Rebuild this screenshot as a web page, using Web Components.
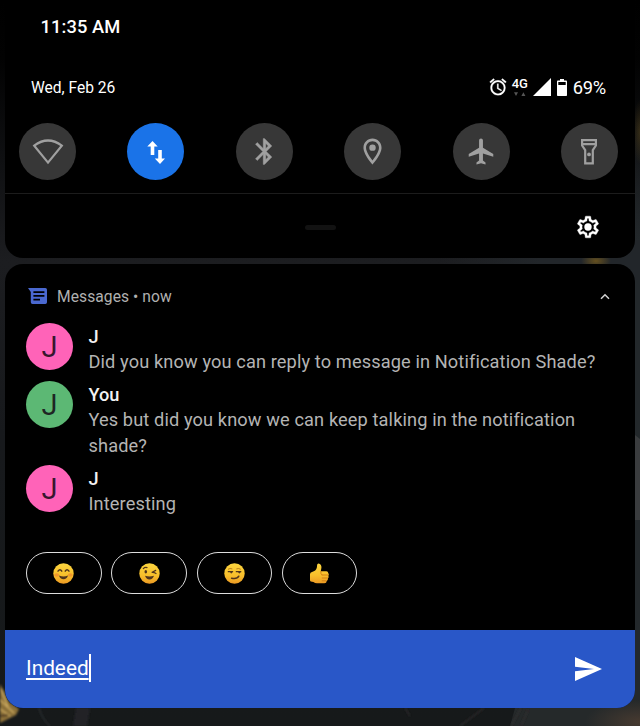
<!DOCTYPE html>
<html lang="en">
<head>
<meta charset="utf-8">
<title>Notification shade</title>
<style>
html,body{margin:0;height:100%;overflow:hidden;background:#000}
body{font-family:Roboto,"Noto Sans",sans-serif;color:#fff}
</style>
</head>
<body>
<notification-shade></notification-shade>
<script>
const ICONS = {
  wifi: ['0 0 32 28', '<path d="M2.2 7.6Q16 -2.6 29.8 7.6L16 24.6Z" fill="none" stroke="currentColor" stroke-width="2.2"/>'],
  data: ['0 0 18 26', '<path d="M5.5 2 10.7 7.4H7.3V16H3.7V7.4H.3zM13 25 7.8 19.6H11.2V11h3.6v8.6h3.2z" fill="currentColor"/>'],
  bluetooth: ['0 0 24 24', '<path fill="currentColor" stroke="currentColor" stroke-width=".3" d="M17.71 7.71L12 2h-1v7.59L6.41 5 5 6.41 10.59 12 5 17.59 6.41 19 11 14.41V22h1l5.71-5.71-4.3-4.29 4.3-4.29zM13 5.83l1.88 1.88L13 9.59V5.83zm1.88 10.46L13 18.17v-3.76l1.88 1.88z"/>'],
  location: ['0 0 24 24', '<path fill="currentColor" d="M12 2C8.13 2 5 5.13 5 9c0 5.25 7 13 7 13s7-7.75 7-13c0-3.87-3.13-7-7-7zM7 9c0-2.76 2.24-5 5-5s5 2.24 5 5c0 2.88-2.88 7.19-5 9.88C9.92 16.21 7 11.85 7 9z"/><circle cx="12" cy="9" r="2.5" fill="currentColor"/>'],
  plane: ['0 0 23 24', '<path fill="currentColor" d="M21 16v-2l-8-5V3.5c0-.83-.67-1.5-1.5-1.5S10 2.67 10 3.5V9l-8 5v2l8-2.5V19l-2 1.5V22l3.5-1 3.5 1v-1.5L13 19v-5.5l8 2.5z"/>'],
  torch: ['0 0 18 28', '<path d="M2.1 2.1H15.9V7.5L12.8 12.2V25.4H5.2V12.2L2.1 7.5ZM2 6.2H16" fill="none" stroke="currentColor" stroke-width="2.2"/><circle cx="9" cy="16.4" r="1.9" fill="currentColor"/>'],
  gear: ['0 0 24 24', '<path fill="currentColor" stroke="currentColor" stroke-width=".35" d="M19.43 12.98c.04-.32.07-.64.07-.98 0-.34-.03-.66-.07-.98l2.11-1.65c.19-.15.24-.42.12-.64l-2-3.46c-.09-.16-.26-.25-.44-.25-.06 0-.12.01-.17.03l-2.49 1c-.52-.4-1.08-.73-1.69-.98l-.38-2.65C14.46 2.18 14.25 2 14 2h-4c-.25 0-.46.18-.49.42l-.38 2.65c-.61.25-1.17.59-1.69.98l-2.49-1c-.06-.02-.12-.03-.18-.03-.17 0-.34.09-.43.25l-2 3.46c-.13.22-.07.49.12.64l2.11 1.65c-.04.32-.07.65-.07.98 0 .33.03.66.07.98l-2.11 1.65c-.19.15-.24.42-.12.64l2 3.46c.09.16.26.25.44.25.06 0 .12-.01.17-.03l2.49-1c.52.4 1.08.73 1.69.98l.38 2.65c.03.24.24.42.49.42h4c.25 0 .46-.18.49-.42l.38-2.65c.61-.25 1.17-.59 1.69-.98l2.49 1c.06.02.12.03.18.03.17 0 .34-.09.43-.25l2-3.46c.12-.22.07-.49-.12-.64l-2.11-1.65zm-1.98-1.71c.04.31.05.52.05.73 0 .21-.02.43-.05.73l-.14 1.13.89.7 1.08.84-.7 1.21-1.27-.51-1.04-.42-.9.68c-.43.32-.84.56-1.25.73l-1.06.43-.16 1.13-.2 1.35h-1.4l-.19-1.35-.16-1.13-1.06-.43c-.43-.18-.83-.41-1.23-.71l-.91-.7-1.06.43-1.27.51-.7-1.21 1.08-.84.89-.7-.14-1.13c-.03-.31-.05-.54-.05-.74s.02-.43.05-.73l.14-1.13-.89-.7-1.08-.84.7-1.21 1.27.51 1.04.42.9-.68c.43-.32.84-.56 1.25-.73l1.06-.43.16-1.13.2-1.35h1.39l.19 1.35.16 1.13 1.06.43c.43.18.83.41 1.23.71l.91.7 1.06-.43 1.27-.51.7 1.21-1.07.85-.89.7.14 1.13z"/><circle cx="12" cy="12" r="3.4" fill="currentColor"/>'],
  alarm: ['0 0 24 24', '<path fill="currentColor" stroke="currentColor" stroke-width=".3" d="M22 5.72l-4.6-3.86-1.29 1.53 4.6 3.86L22 5.72zM7.88 3.39L6.6 1.86 2 5.71l1.29 1.53 4.59-3.85zM12.5 8H11v6l4.75 2.85.75-1.23-4-2.37V8zM12 4c-4.97 0-9 4.03-9 9s4.02 9 9 9a9 9 0 0 0 0-18zm0 16c-3.87 0-7-3.13-7-7s3.13-7 7-7 7 3.13 7 7-3.13 7-7 7z"/>'],
  signal: ['0 0 18 18', '<path d="M18 0V18H0z" fill="currentColor"/>'],
  battery: ['0 0 10 17', '<path fill="currentColor" fill-rule="evenodd" d="M3 0H7V1.6H9.2Q10 1.6 10 2.4V16.2Q10 17 9.2 17H.8Q0 17 0 16.2V2.4Q0 1.6 .8 1.6H3zM1.3 3V6H8.7V3z"/>'],
  activity: ['0 0 12 4', '<path d="M0 .3H4L2 3.9zM7.4 3.9H11.4L9.4.3z" fill="currentColor"/>'],
  messages: ['0 0 19 16', '<path fill="currentColor" fill-rule="evenodd" d="M0 0H17.3Q19 0 19 1.7V14.3Q19 16 17.3 16H4.5Q2.8 16 2.8 14.3V4zM5.4 3.2V5H16.4V3.2zM5.4 7V8.8H16.4V7zM5.4 10.8V12.6H12V10.8z"/>'],
  up: ['0 0 10 7', '<path d="M1 5.8 5 1.7 9 5.8" fill="none" stroke="currentColor" stroke-width="1.5"/>'],
  send: ['0 0 27 24', '<path d="M0 0 27 12 0 24V14.3L19 12 0 9.7z" fill="currentColor"/>'],
  smile: ['0 0 21 21', '<circle cx="10.5" cy="10.5" r="10.2" fill="url(#g)"/><ellipse cx="3.7" cy="12" rx="2.4" ry="1.7" fill="#f08a2e" opacity=".75"/><ellipse cx="17.3" cy="12" rx="2.4" ry="1.7" fill="#f08a2e" opacity=".75"/><path d="M5 8.2Q7 5.2 8.8 8.2M12.2 8.2Q14 5.2 16 8.2" fill="none" stroke="#51351b" stroke-width="1.4" stroke-linecap="round"/><path d="M6 12.5Q10.5 14.3 15 12.5Q13.8 16.3 10.5 16.3T6 12.5z" fill="#51351b"/>'],
  wink: ['0 0 21 21', '<circle cx="10.5" cy="10.5" r="10.2" fill="url(#g)"/><ellipse cx="6.8" cy="8.8" rx="1.3" ry="1.8" fill="#51351b"/><path d="M4.3 5.6Q5.8 4 8 4.6M16.7 7.4 12.7 9.5Q14.7 9 17 10.5" fill="none" stroke="#51351b" stroke-width="1.2" stroke-linecap="round"/><path d="M6 12.8Q10.5 14.3 15 12.8Q13.8 16.5 10.5 16.5T6 12.8z" fill="#51351b"/>'],
  smirk: ['0 0 21 21', '<circle cx="10.5" cy="10.5" r="10.2" fill="url(#g)"/><path d="M4.3 8.7H8.6M12.3 8.7H16.8" stroke="#51351b" stroke-width="1.3" stroke-linecap="round"/><path d="M6.1 8.8H8.5Q8.3 10.5 7.3 10.5T6.1 8.8zM14.1 8.8H16.6Q16.4 10.5 15.4 10.5T14.1 8.8z" fill="#51351b"/><path d="M4 6.3Q6 4.9 8.3 5.9M12.4 5.9Q14.6 4.9 16.8 6.3" fill="none" stroke="#a66b17" stroke-width=".8"/><path d="M7.6 15.2Q13 16.4 14.8 13.2" fill="none" stroke="#51351b" stroke-width="1.5" stroke-linecap="round"/>'],
  thumb: ['0 0 21 21', '<path d="M1 11.2Q1 9.3 3 9 7 8 7.8 4.8L8.2 1.6Q9.2 0 10.8.9 13 2.4 12.3 5.6L11.8 8.2H17.3Q19.3 8.2 19.2 10 20.4 11 19.4 12.7 20.2 14.2 18.9 15.5 19.2 17.3 17.7 18 17.6 20.2 15.4 20.2H8Q6 20.2 4.4 18.9L1.8 18.6Q1 18.4 1 17z" fill="url(#g)"/><path d="M13 12H18.8M13.2 15H18.3M13.2 17.8H17M13 12Q11.4 11.4 11.8 8.4" fill="none" stroke="#cf7b13" stroke-width=".9" stroke-linecap="round"/>']
};
const GRAD = '<defs><linearGradient id="g" x1="0" y1="0" x2="0" y2="1"><stop offset="0" stop-color="#fcd53f"/><stop offset=".6" stop-color="#f8bf2b"/><stop offset="1" stop-color="#ec9a24"/></linearGradient></defs>';

function define(name, markup, after) {
  const tpl = document.createElement('template');
  tpl.innerHTML = markup;
  customElements.define(name, class extends HTMLElement {
    constructor() {
      super();
      this.attachShadow({ mode: 'open' }).append(tpl.content.cloneNode(true));
    }
    connectedCallback() { if (after) after(this, this.shadowRoot); }
  });
}

define('ui-icon', '<style>:host{display:block;flex:none}svg{display:block;width:100%;height:100%}</style><svg></svg>', (el, root) => {
  const [box, body] = ICONS[el.getAttribute('name')];
  const svg = root.querySelector('svg');
  svg.setAttribute('viewBox', box);
  svg.innerHTML = (body.includes('url(#g)') ? GRAD : '') + body;
  el.style.width = el.getAttribute('w') + 'px';
  el.style.height = el.getAttribute('h') + 'px';
});

define('quick-tile', `<style>
:host{display:flex;align-items:center;justify-content:center;width:57px;height:57px;border-radius:50%;background:#373737;color:#a0a0a0}
:host([active]){background:#1a73e8;color:#fff}
</style><slot></slot>`);

define('status-row', `<style>
:host{display:flex;align-items:center;height:24px;padding:0 29px 0 26px;font-size:15.6px;line-height:24px}
.date{padding-top:1px;letter-spacing:-.02px}
.right{margin-left:auto;display:flex;align-items:center}
.net{display:flex;flex-direction:column;align-items:center;width:16px;height:20px;margin:0 5px 0 4px;font-size:13px;line-height:14px;font-weight:500;letter-spacing:-.3px}
.act{color:#555;margin-top:1px}
.pct{font-size:18.3px;margin-left:6px;letter-spacing:-.2px;padding-top:1px}
</style><span class="date">Wed, Feb 26</span><div class="right">
<ui-icon name="alarm" w="20" h="20"></ui-icon>
<div class="net"><span>4G</span><ui-icon class="act" name="activity" w="12" h="4"></ui-icon></div>
<ui-icon name="signal" w="18" h="18"></ui-icon>
<ui-icon name="battery" w="10" h="17" style="margin-left:6px"></ui-icon>
<span class="pct">69%</span></div>`);

define('quick-settings', `<style>
:host{display:flex;flex-direction:column;box-sizing:border-box;height:258px;background:#000;border-radius:0 0 18px 18px}
.time{padding:15px 0 0 35.5px;height:60px;box-sizing:border-box;font-size:18.3px;line-height:24px;font-weight:500;letter-spacing:.1px}
status-row{margin-top:15px}
.tiles{display:flex;justify-content:space-between;padding:24px 17px 13px 14px}
.foot{flex:1;border-top:1px solid #1c1c1c;display:grid;grid-template-columns:1fr 31px 1fr;align-items:center}
.handle{height:5px;border-radius:3px;background:#121212;grid-column:2;margin-top:3px}
ui-icon.gear{justify-self:end;margin:2px 34px 0 0}
</style>
<div class="time">11:35 AM</div>
<status-row></status-row>
<div class="tiles">
<quick-tile><ui-icon name="wifi" w="32" h="28"></ui-icon></quick-tile>
<quick-tile active><ui-icon name="data" w="18" h="26"></ui-icon></quick-tile>
<quick-tile><ui-icon name="bluetooth" w="31" h="31"></ui-icon></quick-tile>
<quick-tile><ui-icon name="location" w="31" h="31"></ui-icon></quick-tile>
<quick-tile><ui-icon name="plane" w="30" h="31"></ui-icon></quick-tile>
<quick-tile><ui-icon name="torch" w="18" h="28"></ui-icon></quick-tile>
</div>
<div class="foot"><span class="handle"></span><ui-icon class="gear" name="gear" w="26" h="26"></ui-icon></div>`);

define('chat-message', `<style>
:host{display:flex;gap:15.5px;line-height:26px;font-size:18.2px}
.avatar{flex:none;width:47px;height:47px;border-radius:50%;display:grid;place-items:center;background:var(--tint,#ff63b8);color:rgba(20,10,20,.85);font-size:29px;line-height:48px;font-weight:400}
.name{font-weight:500;color:#f2f2f2;padding-top:1px;margin-bottom:-1px}
.text{color:#b4b4b4;letter-spacing:.12px}
</style>
<div class="avatar">J</div><div><div class="name"><slot name="name"></slot></div><div class="text"><slot></slot></div></div>`);

define('reply-chip', `<style>
:host{display:flex;align-items:center;justify-content:center;box-sizing:border-box;width:75.5px;height:42px;border:1.4px solid #ddd;border-radius:21px}
</style><slot></slot>`);

define('reply-bar', `<style>
:host{display:flex;align-items:center;justify-content:space-between;height:78px;box-sizing:border-box;padding:0 33px 0 21px;background:#2957c8}
.field{display:flex;align-items:center;height:28px;margin-top:-3px;font-size:20.8px;line-height:26px}
.field span{text-decoration:underline;text-decoration-thickness:1.5px;text-underline-offset:3px}
.caret{width:2px;height:28px;background:#fff}
</style><div class="field"><span><slot></slot></span><i class="caret"></i></div><ui-icon name="send" w="27" h="24"></ui-icon>`);

define('message-notification', `<style>
:host{display:flex;flex-direction:column;height:444px;border-radius:18px;background:#000;overflow:hidden}
header{display:flex;align-items:center;height:20px;padding:22px 25px 17px 23px;font-size:15.6px;color:#b0b0b0}
header span{margin-left:10px;padding-top:1px;letter-spacing:.07px}
header .up{margin-left:auto;color:#d0d0d0}
.list{display:flex;flex-direction:column;gap:6px;padding:0 30px 0 21px}
.chips{display:flex;gap:9.8px;padding:35px 21px 0}
reply-bar{margin-top:auto}
</style>
<header><ui-icon name="messages" w="19" h="16" style="color:#4a68cf"></ui-icon><span>Messages • now</span><ui-icon class="up" name="up" w="10" h="7"></ui-icon></header>
<div class="list">
<chat-message><span slot="name">J</span>Did you know you can reply to message in Notification Shade?</chat-message>
<chat-message style="--tint:#5cb874"><span slot="name">You</span>Yes but did you know we can keep talking in the notification shade?</chat-message>
<chat-message><span slot="name">J</span>Interesting</chat-message>
</div>
<div class="chips">
<reply-chip><ui-icon name="smile" w="21" h="21"></ui-icon></reply-chip>
<reply-chip><ui-icon name="wink" w="21" h="21"></ui-icon></reply-chip>
<reply-chip><ui-icon name="smirk" w="21" h="21"></ui-icon></reply-chip>
<reply-chip><ui-icon name="thumb" w="21" h="21"></ui-icon></reply-chip>
</div>
<reply-bar>Indeed</reply-bar>`);

define('shade-wallpaper', `<style>:host{display:block;position:absolute;inset:0;z-index:-1}svg{display:block}</style>
<svg width="640" height="726" viewBox="0 0 640 726">
<defs><linearGradient id="b" x1="0" y1="0" x2="0" y2="1"><stop offset="0" stop-color="#000"/><stop offset=".08" stop-color="#020202"/><stop offset=".22" stop-color="#0f1012"/><stop offset=".36" stop-color="#1c1d20"/><stop offset=".6" stop-color="#17191c"/><stop offset="1" stop-color="#16191a"/></linearGradient>
<linearGradient id="e" x1="0" y1="0" x2="0" y2="1"><stop offset="0" stop-color="#23282b" stop-opacity="0"/><stop offset=".2" stop-color="#23282b"/></linearGradient>
<linearGradient id="h"><stop offset="0" stop-color="#22262a" stop-opacity="0"/><stop offset=".5" stop-color="#22262a"/></linearGradient>
<radialGradient id="o"><stop offset="0" stop-color="#65501f"/><stop offset="1" stop-color="#65501f" stop-opacity="0"/></radialGradient>
<radialGradient id="r"><stop offset="0" stop-color="#473a30"/><stop offset="1" stop-color="#473a30" stop-opacity="0"/></radialGradient>
<filter id="s"><feGaussianBlur stdDeviation=".8"/></filter></defs>
<rect width="640" height="726" fill="url(#b)"/>
<rect x="635" y="120" width="5" height="606" fill="url(#e)"/>
<rect x="440" y="240" width="200" height="40" fill="url(#h)"/>
<ellipse cx="596" cy="261" rx="15" ry="8" fill="url(#o)"/>
<ellipse cx="640" cy="132" rx="8" ry="32" fill="url(#o)" opacity=".45"/>
<path d="M635 435 640 439V520H635z" fill="#3a3c3e"/>
<path d="M520 690H640V726H510z" fill="#25292a"/>
<ellipse cx="640" cy="722" rx="55" ry="22" fill="url(#r)"/>
<g filter="url(#s)"><path d="M0 684 5 693 9 702 19 709 16 715 0 723z" fill="#8b7039"/><path d="M0 700 14 713M0 709 10 716M1 689 8 707" stroke="#d0ae63" stroke-width="1.3"/><path d="M0 716 8 715" stroke="#4d3822" stroke-width="2"/>
<path d="M39 708Q42 719 50 726" fill="none" stroke="#34383b"/><path d="M73 726 76 708H90L87 726z" fill="#212427"/><path d="M511 726 521 708M521 726 528 710M405 708 410 716M460 726 484 708" stroke="#302d2e" stroke-width="1.3" fill="none"/></g>
</svg>`);

define('notification-shade', `<style>
:host{display:flex;flex-direction:column;gap:6px;position:relative;z-index:0;box-sizing:border-box;width:640px;height:726px;padding:0 5px;overflow:hidden}
</style>
<shade-wallpaper></shade-wallpaper>
<quick-settings></quick-settings>
<message-notification></message-notification>`);
</script>
</body>
</html>
